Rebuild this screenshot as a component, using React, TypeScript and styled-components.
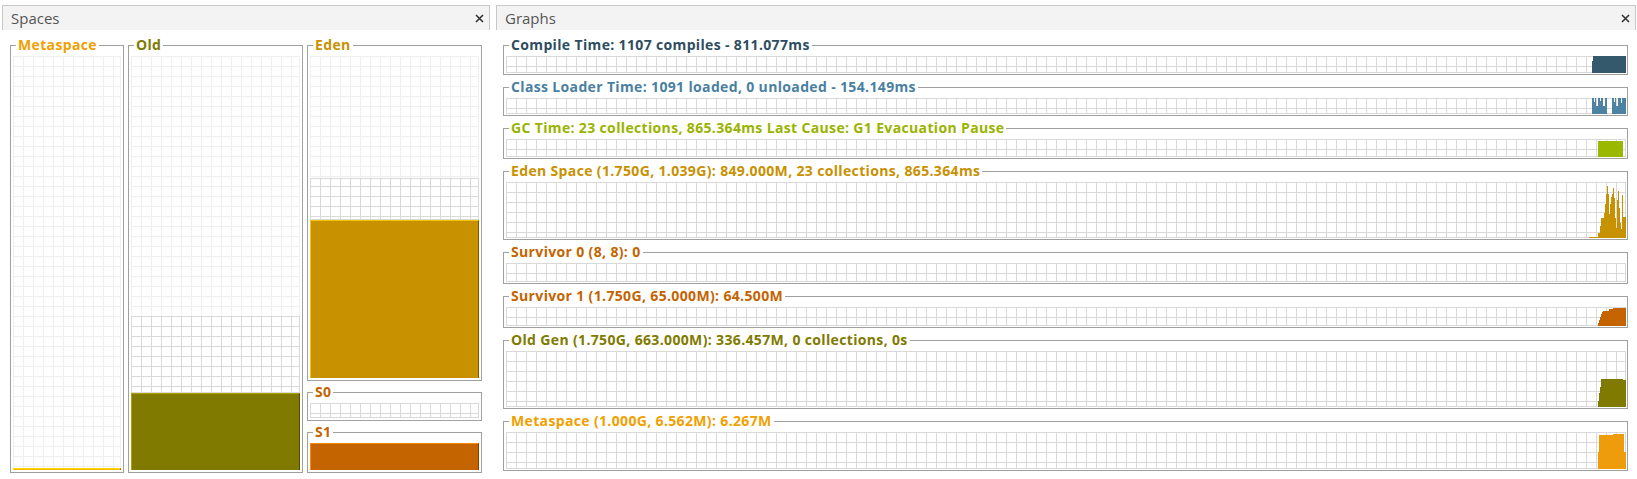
import React from "react";
import styled, { createGlobalStyle, css } from "styled-components";

const GlobalStyle = createGlobalStyle`
  html, body { margin: 0; padding: 0; background: #fff; }
  body { font-family: "Open Sans", "DejaVu Sans", sans-serif; }
  *, *::before, *::after { box-sizing: border-box; }
`;

const lattice = (c: string) => css`
  background-image: linear-gradient(to right, ${c} 1px, transparent 1px),
    linear-gradient(to bottom, ${c} 1px, transparent 1px);
  background-size: 10px 10px;
`;

const LIGHT = "#efefef";
const DARK = "#d9d9d9";

const Root = styled.div`
  display: flex;
  gap: 6px;
  padding: 5px 1px 0 2px;
  width: 1637px;
  height: 479px;
  overflow: hidden;
`;

const Panel = styled.section<{ $width?: number }>`
  display: flex;
  flex-direction: column;
  ${(p) => (p.$width ? `width: ${p.$width}px; flex: none;` : `flex: 1; min-width: 0;`)}
`;

const PanelHeader = styled.header`
  height: 25px;
  flex: none;
  display: flex;
  align-items: center;
  justify-content: space-between;
  padding: 0 5px 0 8px;
  background: #f3f3f3;
  border: 1px solid #c8c8c8;
  border-bottom: none;
`;

const PanelTitle = styled.span`
  font: 400 15px/1 "Open Sans", sans-serif;
  color: #555;
`;

const CloseButton = styled.button`
  border: 0;
  background: none;
  padding: 0;
  width: 9px;
  height: 9px;
  display: flex;
  cursor: pointer;
`;

const SpacesBody = styled.div`
  display: flex;
  gap: 4px;
  padding: 7px 8px 0 8px;
  height: 443px;
`;

const GraphsBody = styled.div`
  display: flex;
  flex-direction: column;
  gap: 4px;
  padding: 7px 8px 0 7px;
`;

const Box = styled.fieldset<{ $width?: number; $grow?: boolean }>`
  margin: 0;
  min-width: 0;
  border: 1px solid #a0a0a0;
  display: flex;
  flex-direction: column;
  ${(p) => (p.$width ? `width: ${p.$width}px; flex: none;` : "")}
  ${(p) => (p.$grow ? `flex: 1 1 0; min-height: 0;` : "")}
`;

const SpaceBoxFrame = styled(Box)`
  padding: 3px 2px 2px 2px;
`;

const GraphBoxFrame = styled(Box)`
  padding: 3px 1px 1px 2px;
`;

const Legend = styled.legend<{ $color: string }>`
  margin-left: 3px;
  padding: 0 2px;
  font: 700 14px/16px "Open Sans", sans-serif;
  letter-spacing: 0.35px;
  color: ${(p) => p.$color};
  white-space: nowrap;
`;

const Column = styled.div<{ $width: number }>`
  width: ${(p) => p.$width}px;
  flex: none;
  display: flex;
  flex-direction: column;
  gap: 3px;
`;

const SpaceGrid = styled.div<{ $h?: number }>`
  ${(p) => (p.$h ? `height: ${p.$h}px; flex: none;` : `flex: 1;`)}
  display: flex;
  flex-direction: column;
  background-color: #fff;
  ${lattice(DARK)}
`;

const Reserved = styled.div`
  flex: 1;
  min-height: 0;
  background-color: #fff;
  ${lattice(LIGHT)}
  border-right: 1px solid ${LIGHT};
`;

const Committed = styled.div<{ $h: number }>`
  height: ${(p) => p.$h}px;
  flex: none;
  border: 1px solid ${DARK};
  border-left: none;
`;

const Used = styled.div<{ $h: number; $fill: string; $hi: string; $lo: string }>`
  height: ${(p) => p.$h}px;
  flex: none;
  background: ${(p) => p.$fill};
  border-top: 1px solid ${(p) => p.$hi};
  border-left: 1px solid ${(p) => p.$hi};
  border-right: 1px solid ${(p) => p.$lo};
`;

const GraphGrid = styled.div<{ $h: number }>`
  position: relative;
  height: ${(p) => p.$h}px;
  flex: none;
  background-color: #fff;
  ${lattice(DARK)}
  border-right: 1px solid ${DARK};
  border-bottom: 1px solid ${DARK};
`;

const ChartSvg = styled.svg`
  position: absolute;
  right: -1px;
  bottom: -1px;
  shape-rendering: crispEdges;
`;

type Cols = Array<[number, number, number]>;

function Chart({ h, color, cols }: { h: number; color: string; cols: Cols }) {
  return (
    <ChartSvg width={40} height={h} viewBox={`0 0 40 ${h}`}>
      {cols.map(([a, b, v], i) => (
        <rect key={i} x={a - 1587} y={h - v} width={b - a} height={v} fill={color} />
      ))}
    </ChartSvg>
  );
}

function CloseIcon() {
  return (
    <CloseButton aria-label="close">
      <svg width="9" height="9" viewBox="0 0 9 9">
        <path d="M1 1 L8 8 M8 1 L1 8" stroke="#333" strokeWidth="1.6" fill="none" />
      </svg>
    </CloseButton>
  );
}

type Bar = { h: number; fill: string; hi: string; lo: string };

function SpaceBox({
  label,
  color,
  width,
  grow,
  gridH,
  committed,
  bar,
}: {
  label: string;
  color: string;
  width?: number;
  grow?: boolean;
  gridH?: number;
  committed?: number;
  bar?: Bar;
}) {
  return (
    <SpaceBoxFrame $width={width} $grow={grow}>
      <Legend $color={color}>{label}</Legend>
      <SpaceGrid $h={gridH}>
        <Reserved />
        {committed ? <Committed $h={committed} /> : null}
        {bar ? <Used $h={bar.h} $fill={bar.fill} $hi={bar.hi} $lo={bar.lo} /> : null}
      </SpaceGrid>
    </SpaceBoxFrame>
  );
}

function GraphBox({ label, color, h, chartColor, cols }: { label: string; color: string; h: number; chartColor: string; cols: Cols }) {
  return (
    <GraphBoxFrame>
      <Legend $color={color}>{label}</Legend>
      <GraphGrid $h={h}>{cols.length ? <Chart h={h} color={chartColor} cols={cols} /> : null}</GraphGrid>
    </GraphBoxFrame>
  );
}

const META = "#f0a000";
const OLD = "#807a00";
const EDEN = "#c89100";
const SURV = "#c46400";

const graphs: Array<{ label: string; color: string; h: number; chartColor: string; cols: Cols }> = [
  {
    label: "Compile Time: 1107 compiles - 811.077ms",
    color: "#2e4d60",
    h: 17,
    chartColor: "#34596d",
    cols: [
      [1593, 1594, 12],
      [1594, 1627, 17],
    ],
  },
  {
    label: "Class Loader Time: 1091 loaded, 0 unloaded - 154.149ms",
    color: "#4a7fa2",
    h: 16,
    chartColor: "#4e82a3",
    cols: [
      [1593, 1608, 8],
      [1613, 1627, 8],
      [1593, 1595, 16],
      [1595, 1596, 12],
      [1596, 1597, 16],
      [1599, 1601, 16],
      [1601, 1602, 13],
      [1602, 1604, 16],
      [1606, 1608, 16],
      [1613, 1615, 16],
      [1615, 1616, 12],
      [1616, 1617, 16],
      [1619, 1622, 16],
      [1622, 1623, 11],
      [1623, 1627, 16],
    ],
  },
  {
    label: "GC Time: 23 collections, 865.364ms Last Cause: G1 Evacuation Pause",
    color: "#99b400",
    h: 18,
    chartColor: "#9bb800",
    cols: [[1599, 1624, 16]],
  },
  {
    label: "Eden Space (1.750G, 1.039G): 849.000M, 23 collections, 865.364ms",
    color: EDEN,
    h: 56,
    chartColor: EDEN,
    cols: [
      [1590, 1599, 1],
      [1599, 1601, 5],
      [1601, 1602, 12],
      [1602, 1605, 20],
      [1605, 1606, 25],
      [1606, 1607, 34],
      [1607, 1608, 44],
      [1608, 1609, 52],
      [1609, 1610, 44],
      [1610, 1611, 24],
      [1611, 1612, 34],
      [1612, 1613, 41],
      [1613, 1614, 44],
      [1614, 1615, 50],
      [1615, 1616, 40],
      [1616, 1617, 20],
      [1617, 1618, 10],
      [1618, 1619, 38],
      [1619, 1620, 47],
      [1620, 1621, 30],
      [1621, 1622, 15],
      [1622, 1623, 9],
      [1623, 1624, 43],
      [1624, 1627, 21],
    ],
  },
  {
    label: "Survivor 0 (8, 8): 0",
    color: SURV,
    h: 19,
    chartColor: SURV,
    cols: [],
  },
  {
    label: "Survivor 1 (1.750G, 65.000M): 64.500M",
    color: SURV,
    h: 19,
    chartColor: SURV,
    cols: [
      [1599, 1600, 3],
      [1600, 1601, 6],
      [1601, 1602, 9],
      [1602, 1603, 12],
      [1603, 1604, 14],
      [1604, 1610, 15],
      [1610, 1614, 17],
      [1614, 1627, 18],
    ],
  },
  {
    label: "Old Gen (1.750G, 663.000M): 336.457M, 0 collections, 0s",
    color: OLD,
    h: 56,
    chartColor: OLD,
    cols: [
      [1599, 1600, 6],
      [1600, 1601, 14],
      [1601, 1602, 20],
      [1602, 1624, 28],
      [1624, 1627, 27],
    ],
  },
  {
    label: "Metaspace (1.000G, 6.562M): 6.267M",
    color: META,
    h: 37,
    chartColor: "#ee9c0c",
    cols: [
      [1599, 1600, 17],
      [1600, 1614, 34],
      [1614, 1625, 35],
      [1625, 1627, 17],
    ],
  },
];

export default function App() {
  return (
    <>
      <GlobalStyle />
      <Root>
        <Panel $width={488}>
          <PanelHeader>
            <PanelTitle>Spaces</PanelTitle>
            <CloseIcon />
          </PanelHeader>
          <SpacesBody>
            <SpaceBox
              label="Metaspace"
              color={META}
              width={114}
              bar={{ h: 2, fill: "#f5c000", hi: "#ffd400", lo: "#b06a00" }}
            />
            <SpaceBox
              label="Old"
              color={OLD}
              width={175}
              committed={77}
              bar={{ h: 77, fill: "#807a00", hi: "#aaa300", lo: "#4f4b00" }}
            />
            <Column $width={175}>
              <SpaceBox
                label="Eden"
                color={EDEN}
                grow
                committed={42}
                bar={{ h: 158, fill: "#c89100", hi: "#f5c400", lo: "#7d5c00" }}
              />
              <SpaceBox label="S0" color={SURV} gridH={15} committed={15} />
              <SpaceBox
                label="S1"
                color={SURV}
                gridH={27}
                bar={{ h: 27, fill: "#c46400", hi: "#ff8a00", lo: "#7f4000" }}
              />
            </Column>
          </SpacesBody>
        </Panel>
        <Panel>
          <PanelHeader>
            <PanelTitle>Graphs</PanelTitle>
            <CloseIcon />
          </PanelHeader>
          <GraphsBody>
            {graphs.map((g) => (
              <GraphBox key={g.label} {...g} />
            ))}
          </GraphsBody>
        </Panel>
      </Root>
    </>
  );
}
